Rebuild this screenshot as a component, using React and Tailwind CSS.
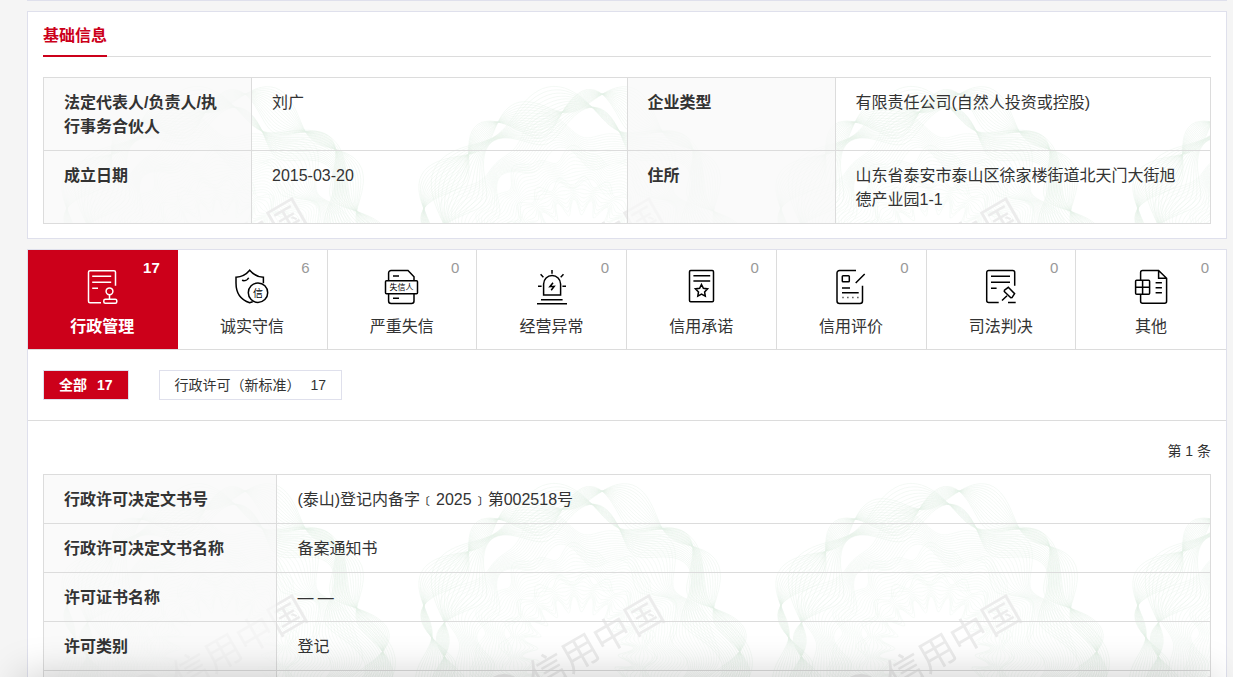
import React, { useId, useState } from 'react';
import clsx from 'clsx';

const TILE = 357;

// one closed wavy curve around the centre of the tile
function ringPath(radiusAt) {
  const steps = 240;
  const points = [];
  for (let i = 0; i < steps; i++) {
    const a = (i / steps) * Math.PI * 2;
    const r = radiusAt(a);
    points.push(`${(178 + r * Math.cos(a)).toFixed(1)} ${(178 + r * Math.sin(a)).toFixed(1)}`);
  }
  return `M${points.join('L')}Z`;
}

// a guilloche band: curves blended between two waves that cross each other
function band(count, inner, outer) {
  return Array.from({ length: count }, (_, i) => {
    const t = i / (count - 1);
    return ringPath(a => inner(a) * (1 - t) + outer(a) * t);
  }).join('');
}

const bands = [
  {
    color: '#e4f1e7',
    d: band(14, a => 157 + 13 * Math.sin(9 * a + 0.4) + 6 * Math.sin(4 * a), a => 146 + 18 * Math.sin(9 * a + 2.6) + 6 * Math.cos(5 * a)),
  },
  {
    color: '#e4f1e7',
    d: band(14, a => 152 + 15 * Math.sin(7 * a + 1) + 8 * Math.cos(3 * a), a => 128 + 16 * Math.sin(8 * a + 0.6) + 5 * Math.sin(3 * a)),
  },
  {
    color: '#e8f3ea',
    d: band(14, a => 130 + 12 * Math.sin(7 * a + 2) + 5 * Math.sin(13 * a), a => 98 + 9 * Math.sin(10 * a) + 5 * Math.cos(3 * a)),
  },
  {
    color: '#ebf4ed',
    d: band(12, a => 102 + 6 * Math.sin(11 * a) + 3 * Math.sin(22 * a), a => 72 + 5 * Math.sin(13 * a + 1)),
  },
  {
    color: '#ebf4ed',
    d: band(10, a => 74 + 5 * Math.sin(20 * a), a => 48 + 8 * Math.sin(20 * a + 3)),
  },
];

function Watermark() {
  const id = useId();
  return (
    <svg className="absolute inset-0 h-full w-full" aria-hidden="true">
      <defs>
        <pattern id={id} width={TILE} height={TILE} patternUnits="userSpaceOnUse">
          {bands.map((b, i) => (
            <path key={i} d={b.d} fill="none" stroke={b.color} strokeWidth="0.4" />
          ))}
          <g transform="translate(180 178) rotate(-30)" fill="#ececec" fontSize="37">
            <circle cx="-88" cy="0" r="20" fill="none" stroke="#ececec" strokeWidth="4" />
            <text x="-56" y="14">信用中国</text>
          </g>
        </pattern>
      </defs>
      <rect width="100%" height="100%" fill={`url(#${id})`} />
    </svg>
  );
}

const icons = {
  admin: (
    <>
      <path d="M31.5 16.7V3.2a1.5 1.5 0 0 0-1.5-1.5H6a1.5 1.5 0 0 0-1.5 1.5v29A1.5 1.5 0 0 0 6 33.7h11M8.2 7.3h19M8.2 13.3h19M8.2 19.3H14" />
      <circle cx="25.5" cy="22.3" r="3.4" />
      <path d="M25.5 25.7v4.6" />
      <rect x="19.8" y="30.3" width="13" height="4" rx="1.5" />
    </>
  ),
  honest: (
    <>
      <path d="M29.4 14.3v-6c-5-.3-10-2.5-13.7-7C12 5.8 7 8 2 8.300V14c0 10 5 17 13.700 19.700l3-1M8 11.300c2.500.9 5.500-.1 6.700-2.600" />
      <circle cx="24" cy="23.700" r="9.700" />
      <text x="24" y="27.500" textAnchor="middle" fontSize="10" fill="currentColor" stroke="none">信</text>
    </>
  ),
  dishonest: (
    <>
      <path d="M4.600 11.700V4a2.500 2.500 0 0 1 2.500-2.500H24l6 6.200v4M4.600 24.700V32a2.500 2.500 0 0 0 2.500 2.500h20.400A2.500 2.500 0 0 0 30 32v-7.300M9 7h6M9 29.300h6" />
      <rect x="1.500" y="11.700" width="32" height="13" rx="1" />
      <text x="17.500" y="21" textAnchor="middle" fontSize="8" fill="currentColor" stroke="none">失信人</text>
    </>
  ),
  abnormal: (
    <path d="M9.600 26V15a8.500 8.500 0 0 1 17 0v11zM7 30.700h21.600M3 34.700h30M18 1v3.700M6.600 5.300l2.800 2.900M29.500 5.300l-2.800 2.900M4 17.300h3.600M28.400 17.300H32M19 13.700l-3.100 4 4.300-.4-3 4" />
  ),
  promise: (
    <>
      <rect x="6.500" y="1.500" width="24" height="31.200" rx="1.200" />
      <path d="M10.400 6.700h16.800M10.400 12h16.800M18.500 15.500l1.900 3.800 4.200.6-3 3 .7 4.200-3.800-2-3.700 2 .7-4.200-3.100-3 4.200-.6z" />
    </>
  ),
  rating: (
    <>
      <path d="M23 1.500H6.500A2.500 2.500 0 0 0 4 4v27.900a2.500 2.500 0 0 0 2.500 2.500H27a2.500 2.500 0 0 0 2.500-2.500V16.700M31.700 5l-9 9M9 19h8M9 23.700h16.700" />
      <rect x="9.300" y="6.700" width="7" height="6" rx="0.800" />
      <path d="M9.500 28.400h1M14.400 28.400h1M19.400 28.400h1M24.400 28.400h1" />
    </>
  ),
  judgement: (
    <>
      <path d="M31.700 16.700V3.500a2 2 0 0 0-2-2h-24a2 2 0 0 0-2 2v28a2 2 0 0 0 2 2h10M8 7.300h19M8 13.300h19M8 19.300h5.600M25 33.400h7.700M24 26.700l-5 4.800" />
      <path d="M25.300 18.300l6.300 6.300-2.600 4-1.200.2-6.500-6.300.2-1.400z" />
    </>
  ),
  other: (
    <>
      <path d="M7.600 11.300V3.500a2 2 0 0 1 2-2h16l8 7.800v23a2 2 0 0 1-2 2h-22a2 2 0 0 1-2-2v-7M25.600 1.500v7.800h8M22.600 13.700h6.300M22.600 18.700h6.300M22.600 23.700h6.300" />
      <rect x="2.600" y="11.300" width="14" height="14" rx="1" />
      <path d="M9.600 11.300v14M2.600 18.300h14" />
    </>
  ),
};

const tabs = [
  { key: 'admin', label: '行政管理', count: 17 },
  { key: 'honest', label: '诚实守信', count: 6 },
  { key: 'dishonest', label: '严重失信', count: 0 },
  { key: 'abnormal', label: '经营异常', count: 0 },
  { key: 'promise', label: '信用承诺', count: 0 },
  { key: 'rating', label: '信用评价', count: 0 },
  { key: 'judgement', label: '司法判决', count: 0 },
  { key: 'other', label: '其他', count: 0 },
];

const filters = [
  { label: '全部', count: 17 },
  { label: '行政许可（新标准）', count: 17 },
];

const baseInfo = [
  [
    { label: '法定代表人/负责人/执行事务合伙人', value: '刘广' },
    { label: '企业类型', value: '有限责任公司(自然人投资或控股)' },
  ],
  [
    { label: '成立日期', value: '2015-03-20' },
    { label: '住所', value: '山东省泰安市泰山区徐家楼街道北天门大街旭德产业园1-1' },
  ],
];

const permit = [
  { label: '行政许可决定文书号', value: '(泰山)登记内备字﹝2025﹞第002518号' },
  { label: '行政许可决定文书名称', value: '备案通知书' },
  { label: '许可证书名称', value: '— —' },
  { label: '许可类别', value: '登记' },
  { label: '', value: '' },
];

function LabelCell({ children, className }) {
  return (
    <th
      scope="row"
      className={clsx('h-12 border border-[#dcdcdc] bg-[#f8f8f8]/75 px-5 pt-[13px] pb-[11px] text-left align-top font-bold', className)}
    >
      {children}
    </th>
  );
}

function ValueCell({ children }) {
  return <td className="border border-[#dcdcdc] px-5 pt-[13px] pb-[11px] align-top">{children}</td>;
}

function InfoTable({ children }) {
  return (
    <div className="relative overflow-hidden">
      <Watermark />
      <table className="relative w-full table-fixed border-collapse text-base leading-6">
        <tbody>{children}</tbody>
      </table>
    </div>
  );
}

export default function App() {
  const [activeTab, setActiveTab] = useState('admin');
  const [activeFilter, setActiveFilter] = useState('全部');

  return (
    <div className="h-screen overflow-hidden bg-[#f5f5f5] pr-1.5 pl-[27px] font-['Liberation_Sans','Noto_Sans_CJK_SC',sans-serif] text-[#333]">
      <main className="flex flex-col gap-2.5">
        <div className="border-t border-[#dfe0ec]" />

        {/* 基础信息 */}
        <section className="border border-[#dfe0ec] bg-white px-[15px] pb-3.5">
          <div className="mb-5 flex border-b border-[#dcdcdc]">
            <h2 className="-mb-px border-b-2 border-[#cc001a] pt-3 pb-[7px] text-base leading-6 font-bold text-[#cc001a]">
              基础信息
            </h2>
          </div>
          <InfoTable>
            {baseInfo.map((row, i) => (
              <tr key={i} className="h-[73px]">
                {row.map(item => (
                  <React.Fragment key={item.label}>
                    <LabelCell className="w-[208px]">{item.label}</LabelCell>
                    <ValueCell>{item.value}</ValueCell>
                  </React.Fragment>
                ))}
              </tr>
            ))}
          </InfoTable>
        </section>

        {/* 信用记录 */}
        <section className="border border-[#dfe0ec] bg-white">
          <div className="grid grid-cols-8 border-b border-[#dcdcdc]">
            {tabs.map(tab => {
              const active = tab.key === activeTab;
              return (
                <button
                  key={tab.key}
                  type="button"
                  onClick={() => setActiveTab(tab.key)}
                  className={clsx(
                    'relative flex flex-col items-center gap-2.5 border-r pt-[19px] pb-2.5 last:border-r-0',
                    active ? 'border-[#cc001a] bg-[#cc001a] font-bold text-white' : 'border-[#dcdcdc]'
                  )}
                >
                  <svg
                    viewBox="0 0 36 36"
                    className={clsx('size-9', active ? 'text-white' : 'text-black')}
                    fill="none"
                    stroke="currentColor"
                    strokeWidth="1.5"
                    fontWeight="400"
                    aria-hidden="true"
                  >
                    {icons[tab.key]}
                  </svg>
                  <span className="text-base leading-6">{tab.label}</span>
                  <span className={clsx('absolute top-2 right-[17px] text-[15px] leading-5', active ? 'text-white' : 'text-[#999]')}>
                    {tab.count}
                  </span>
                </button>
              );
            })}
          </div>

          <div className="flex gap-[30px] border-b border-[#dcdcdc] px-[15px] py-5">
            {filters.map(item => {
              const active = item.label === activeFilter;
              return (
                <button
                  key={item.label}
                  type="button"
                  onClick={() => setActiveFilter(item.label)}
                  className={clsx(
                    'flex h-[30px] items-center gap-2.5 border border-[#dfe0ec] px-[15px] text-sm leading-5',
                    active && 'bg-[#cc001a] font-bold text-white'
                  )}
                >
                  <span>{item.label}</span>
                  <span>{item.count}</span>
                </button>
              );
            })}
          </div>

          <div className="px-[15px] pt-5">
            <p className="mb-3 text-right text-sm leading-[21px]">第 1 条</p>
            <InfoTable>
              {permit.map((item, i) => (
                <tr key={i}>
                  <LabelCell className="w-1/5">{item.label}</LabelCell>
                  <ValueCell>{item.value}</ValueCell>
                </tr>
              ))}
            </InfoTable>
          </div>
        </section>
      </main>

      {/* shadow of the bar docked under the page */}
      <div className="pointer-events-none fixed inset-x-5 top-full h-10 shadow-[0_0_40px_rgba(0,0,0,0.22)]" />
    </div>
  );
}
